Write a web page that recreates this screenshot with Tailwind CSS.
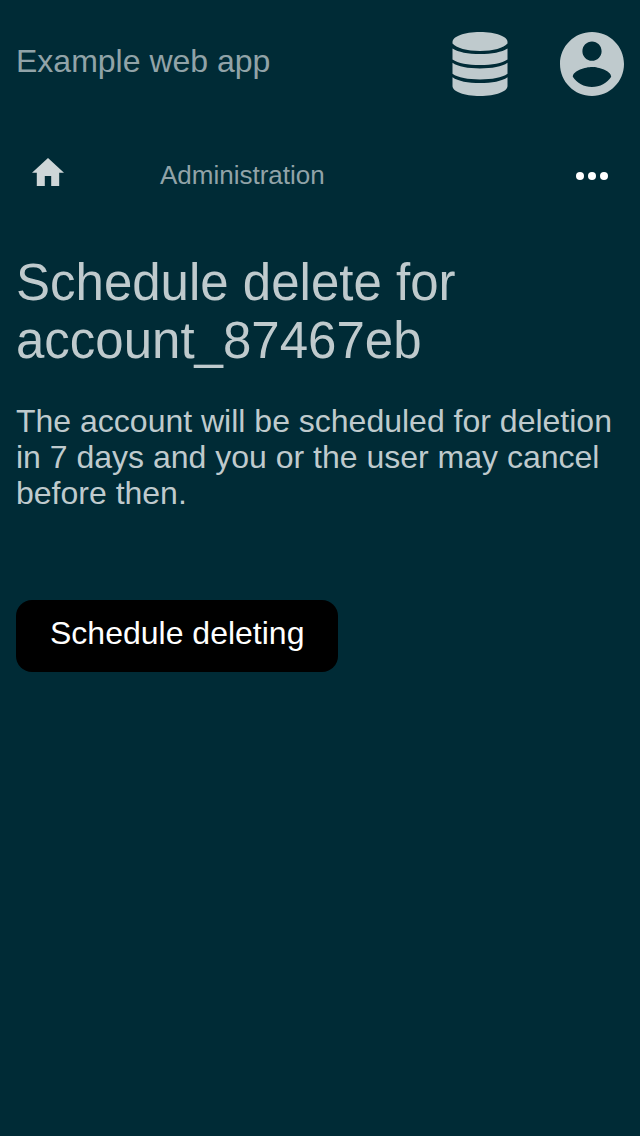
<!DOCTYPE html>
<html lang="en">
<head>
<meta charset="utf-8">
<meta name="viewport" content="width=device-width, initial-scale=1">
<title>Schedule delete</title>
<script src="https://cdn.jsdelivr.net/npm/@tailwindcss/browser@4"></script>
</head>
<body class="min-h-screen bg-[#002b36] font-['Liberation_Sans',Arial,sans-serif] text-[32px] leading-[36px] text-[#bfcacd]">
<header class="flex items-center justify-between px-4 py-8">
  <a href="#" class="pb-1.5 text-[#91a3a8]">Example web app</a>
  <div class="flex items-center gap-12">
    <button type="button" aria-label="Administration menu">
      <svg class="block h-16 w-16" viewBox="0 0 64 64" fill="currentColor" aria-hidden="true">
        <path d="M4.500 10C4.500 4.500 16 0 32 0S59.500 4.500 59.500 10V11.500C56 16 45 19 32 19S8 16 4.500 11.500Z"/>
        <path d="M4.500 16.500C10 20.200 20 22 32 22S54 20.200 59.500 16.500V27.500C54 31.300 44 33 32 33S10 31.300 4.500 27.500Z"/>
        <path d="M4.500 30.800C10 34.800 20 36.500 32 36.500S54 34.800 59.500 30.800V41.800C54 45.800 44 47.500 32 47.500S10 45.800 4.500 41.800Z"/>
        <path d="M4.500 45.200C10 49.200 20 51 32 51S54 49.200 59.500 45.200V54C59.500 59.500 48 64 32 64S4.500 59.500 4.500 54Z"/>
      </svg>
    </button>
    <button type="button" aria-label="Account menu">
      <svg class="block h-16 w-16" viewBox="2 2 20 20" fill="currentColor" aria-hidden="true">
        <path d="M12 2C6.480 2 2 6.480 2 12s4.480 10 10 10 10-4.480 10-10S17.520 2 12 2zm0 3c1.660 0 3 1.340 3 3s-1.340 3-3 3-3-1.340-3-3 1.340-3 3-3zm0 14.200c-2.500 0-4.710-1.280-6-3.220.03-1.990 4-3.080 6-3.080s5.970 1.090 6 3.080c-1.290 1.940-3.500 3.220-6 3.220z"/>
      </svg>
    </button>
  </div>
</header>
<nav class="flex h-24 items-center px-8 text-[26px] text-[#91a3a8]" aria-label="Breadcrumb">
  <a href="#" aria-label="Home" class="mr-24 mb-2 text-[#ced6d8]">
    <svg class="block h-7 w-8" viewBox="2 3 20 17" preserveAspectRatio="none" fill="currentColor" aria-hidden="true"><path d="M10 20v-6h4v6h5v-8h3L12 3 2 12h3v8z"/></svg>
  </a>
  <a href="#" class="mb-0.5">Administration</a>
  <button type="button" aria-label="More" class="ml-auto text-white">
    <svg class="block h-2 w-8" viewBox="0 0 32 8" fill="currentColor" aria-hidden="true"><circle cx="4" cy="4" r="4"/><circle cx="16" cy="4" r="4"/><circle cx="28" cy="4" r="4"/></svg>
  </button>
</nav>
<main class="px-4 pt-[30px]">
  <h1 class="text-[51px] leading-[58px]">Schedule delete for account_87467eb</h1>
  <p class="mt-[33px]">The account will be scheduled for deletion in 7 days and you or the user may cancel before then.</p>
  <form class="mt-[89px]">
    <button type="button" class="rounded-2xl bg-black px-[34px] pt-[15px] pb-[21px] text-white">Schedule deleting</button>
  </form>
</main>
</body>
</html>
